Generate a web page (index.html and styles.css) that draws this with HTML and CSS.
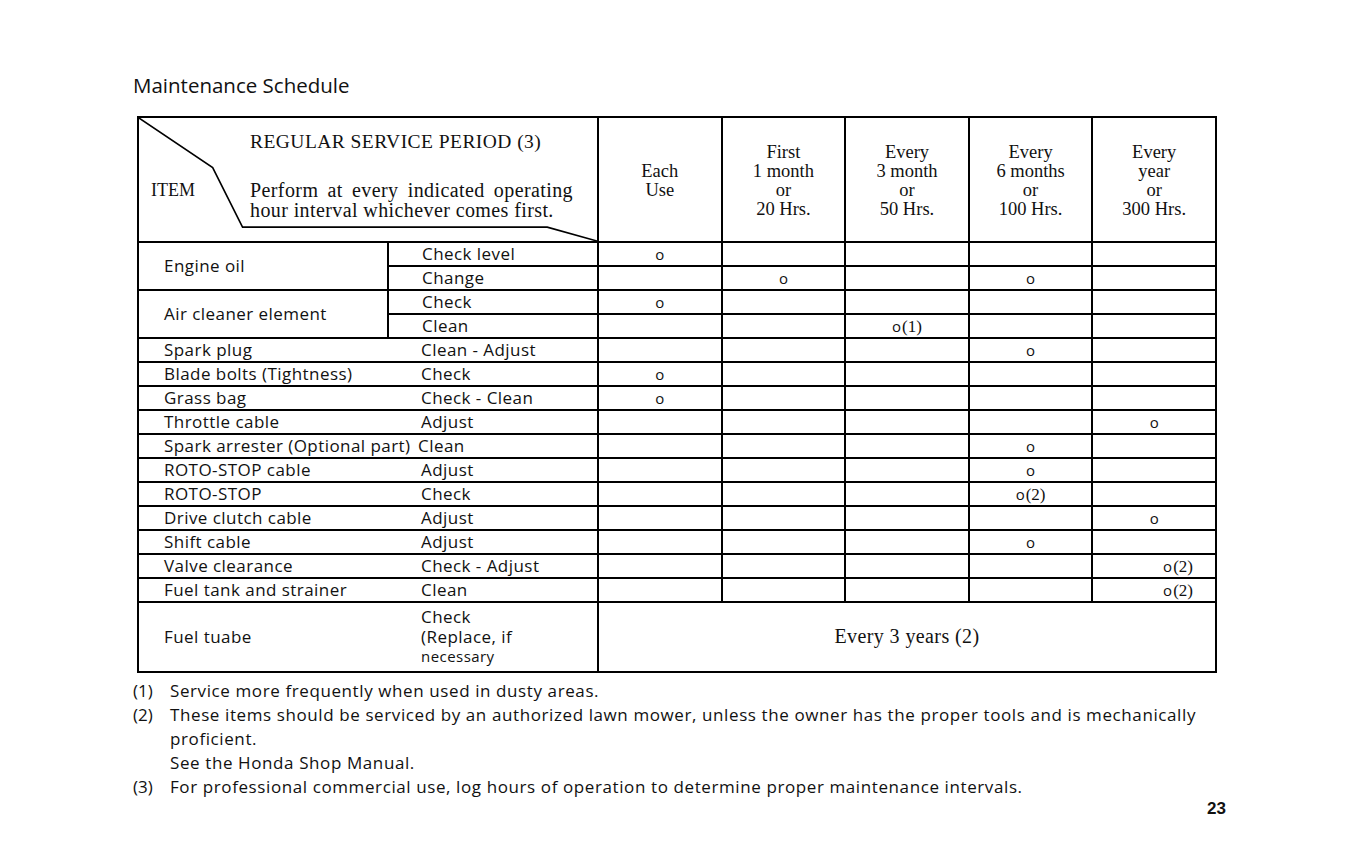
FILE: index.html
```html
<!DOCTYPE html>
<html lang="en">
<head>
<meta charset="utf-8">
<title>Maintenance Schedule</title>
<link rel="stylesheet" href="styles.css">
</head>
<body>
<div class="page">
  <h1 class="title">Maintenance Schedule</h1>
  <table class="schedule">
    <colgroup>
      <col class="c-item"><col class="c-action">
      <col class="c-per"><col class="c-per"><col class="c-per"><col class="c-per"><col class="c-per">
    </colgroup>
    <thead>
      <tr class="head">
        <th colspan="2" class="corner">
          <svg class="diag" viewBox="0 0 460 124" preserveAspectRatio="none" aria-hidden="true">
            <polyline points="0,0 74,50 104,110 410,110 460,124" fill="none" stroke="#000" stroke-width="1.6" vector-effect="non-scaling-stroke"/>
          </svg>
          <div class="corner-grid">
            <div class="period">REGULAR SERVICE PERIOD (3)</div>
            <div class="item-label">ITEM</div>
            <p class="perform">Perform at every indicated operating hour interval whichever comes first.</p>
          </div>
        </th>
        <th class="per">Each<br>Use</th>
        <th class="per">First<br>1 month<br>or<br>20 Hrs.</th>
        <th class="per">Every<br>3 month<br>or<br>50 Hrs.</th>
        <th class="per">Every<br>6 months<br>or<br>100 Hrs.</th>
        <th class="per">Every<br>year<br>or<br>300 Hrs.</th>
      </tr>
    </thead>
    <tbody>
      <tr class="row">
        <td rowspan="2" class="item split">Engine oil</td>
        <td class="action">Check level</td>
        <td class="mark">o</td><td></td><td></td><td></td><td></td>
      </tr>
      <tr class="row">
        <td class="action">Change</td>
        <td></td><td class="mark">o</td><td></td><td class="mark">o</td><td></td>
      </tr>
      <tr class="row">
        <td rowspan="2" class="item split">Air cleaner element</td>
        <td class="action">Check</td>
        <td class="mark">o</td><td></td><td></td><td></td><td></td>
      </tr>
      <tr class="row">
        <td class="action">Clean</td>
        <td></td><td></td><td class="mark">o<span class="ref">(1)</span></td><td></td><td></td>
      </tr>
      <tr class="row">
        <td class="item">Spark plug</td><td class="action joined">Clean - Adjust</td>
        <td></td><td></td><td></td><td class="mark">o</td><td></td>
      </tr>
      <tr class="row">
        <td class="item">Blade bolts (Tightness)</td><td class="action joined">Check</td>
        <td class="mark">o</td><td></td><td></td><td></td><td></td>
      </tr>
      <tr class="row">
        <td class="item">Grass bag</td><td class="action joined">Check - Clean</td>
        <td class="mark">o</td><td></td><td></td><td></td><td></td>
      </tr>
      <tr class="row">
        <td class="item">Throttle cable</td><td class="action joined">Adjust</td>
        <td></td><td></td><td></td><td></td><td class="mark">o</td>
      </tr>
      <tr class="row">
        <td class="item">Spark arrester (Optional part)</td><td class="action joined tight">Clean</td>
        <td></td><td></td><td></td><td class="mark">o</td><td></td>
      </tr>
      <tr class="row">
        <td class="item">ROTO-STOP cable</td><td class="action joined">Adjust</td>
        <td></td><td></td><td></td><td class="mark">o</td><td></td>
      </tr>
      <tr class="row">
        <td class="item">ROTO-STOP</td><td class="action joined">Check</td>
        <td></td><td></td><td></td><td class="mark">o<span class="ref">(2)</span></td><td></td>
      </tr>
      <tr class="row">
        <td class="item">Drive clutch cable</td><td class="action joined">Adjust</td>
        <td></td><td></td><td></td><td></td><td class="mark">o</td>
      </tr>
      <tr class="row">
        <td class="item">Shift cable</td><td class="action joined">Adjust</td>
        <td></td><td></td><td></td><td class="mark">o</td><td></td>
      </tr>
      <tr class="row">
        <td class="item">Valve clearance</td><td class="action joined">Check - Adjust</td>
        <td></td><td></td><td></td><td></td><td class="mark right">o<span class="ref">(2)</span></td>
      </tr>
      <tr class="row">
        <td class="item">Fuel tank and strainer</td><td class="action joined">Clean</td>
        <td></td><td></td><td></td><td></td><td class="mark right">o<span class="ref">(2)</span></td>
      </tr>
      <tr class="tall">
        <td class="item">Fuel tuabe</td>
        <td class="action joined multi">Check<br>(Replace, if<br><span class="small">necessary</span></td>
        <td colspan="5" class="span-note">Every 3 years (2)</td>
      </tr>
    </tbody>
  </table>
  <div class="notes">
    <div class="note"><span class="num">(1)</span><p>Service more frequently when used in dusty areas.</p></div>
    <div class="note"><span class="num">(2)</span><p>These items should be serviced by an authorized lawn mower, unless the owner has the proper tools and is mechanically<br>proficient.<br>See the Honda Shop Manual.</p></div>
    <div class="note"><span class="num">(3)</span><p>For professional commercial use, log hours of operation to determine proper maintenance intervals.</p></div>
  </div>
  <div class="page-num">23</div>
</div>
</body>
</html>
```

FILE: styles.css
```css
html, body {
  margin: 0;
  background: #fff;
}

body {
  color: #111;
  font-family: "Open Sans", "Noto Sans", sans-serif;
}

.page {
  width: 1093px;
  padding: 72px 0 0 133px;
}

.title {
  margin: 0 0 18px;
  font-size: 20.5px;
  line-height: 26px;
  font-weight: 400;
}

.schedule {
  margin-left: 4px;
  width: 1078px;
  border-collapse: collapse;
  table-layout: fixed;
}

.c-item { width: 250px; }
.c-action { width: 210px; }
.c-per { width: 123.6px; }

.schedule th,
.schedule td {
  border: 2px solid #000;
  padding: 0;
}

.head th {
  height: 121px;
  font-family: "Liberation Serif", "Times New Roman", serif;
  font-weight: 400;
  font-size: 18.5px;
  line-height: 19px;
  vertical-align: middle;
  text-align: center;
}

.head .per {
  padding-top: 2px;
}

.corner {
  position: relative;
  vertical-align: top !important;
  text-align: left !important;
}

.diag {
  position: absolute;
  left: 0;
  top: 0;
  width: 100%;
  height: 100%;
}

.corner-grid {
  display: grid;
  grid-template-columns: 111px 323px;
  grid-template-rows: auto auto;
  padding-top: 13px;
}

.period {
  grid-column: 2;
  font-size: 19.5px;
  line-height: 22px;
  letter-spacing: 0.45px;
  margin-bottom: 27px;
}

.item-label {
  grid-column: 1;
  grid-row: 2;
  padding-left: 12px;
  font-size: 18px;
  line-height: 20px;
}

.perform {
  grid-column: 2;
  grid-row: 2;
  margin: 0;
  font-size: 20px;
  line-height: 20px;
  letter-spacing: 0.4px;
  text-align: justify;
}

.row td {
  height: 22px;
  font-size: 17px;
  line-height: 20px;
  letter-spacing: 0.45px;
  vertical-align: middle;
}

.item {
  padding-left: 25px !important;
  white-space: nowrap;
}

.action {
  padding-left: 33px !important;
  white-space: nowrap;
}

.action.tight {
  padding-left: 30px !important;
}

.item:not(.split) {
  border-right-style: hidden !important;
}

.mark {
  text-align: center;
  font-size: 15px !important;
  letter-spacing: 0 !important;
}

.mark.right {
  text-align: right;
  padding-right: 22px !important;
}

.ref {
  font-family: "Liberation Serif", "Times New Roman", serif;
  font-size: 17px;
  margin-left: 1px;
}

.tall td {
  height: 68px;
  font-size: 17px;
  line-height: 19.5px;
  letter-spacing: 0.45px;
  vertical-align: middle;
}

.small {
  font-size: 15px;
}

.span-note {
  text-align: center;
  font-family: "Liberation Serif", "Times New Roman", serif;
  font-size: 20px !important;
  letter-spacing: 0.4px !important;
}

.notes {
  margin-top: 6px;
  font-size: 17px;
  line-height: 24px;
  letter-spacing: 0.6px;
}

.note {
  display: grid;
  grid-template-columns: 37px 1fr;
}

.note .num {
  letter-spacing: 0;
}

.note p {
  margin: 0;
}

.page-num {
  margin-top: 0;
  width: 1093px;
  text-align: right;
  font-family: "Liberation Sans", Arial, sans-serif;
  font-weight: 700;
  font-size: 17px;
  line-height: 20px;
}
```
